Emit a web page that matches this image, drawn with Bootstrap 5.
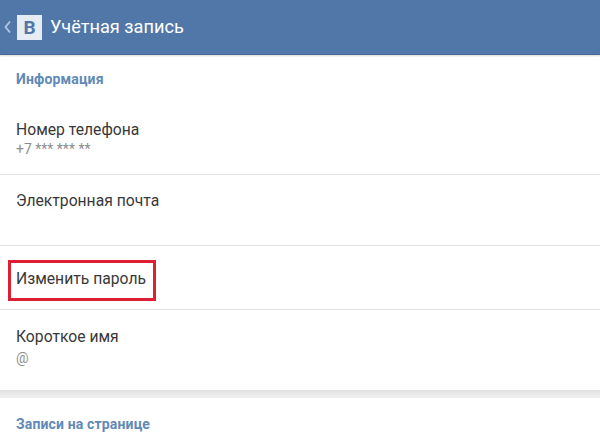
<!DOCTYPE html>
<html lang="ru">
<head>
<meta charset="utf-8">
<link href="https://cdn.jsdelivr.net/npm/bootstrap@5.3.0/dist/css/bootstrap.min.css" rel="stylesheet">
<style>
html,body{height:440px;overflow:hidden;background:#fff}
body{font-family:Roboto,"Noto Sans",sans-serif;color:#3a3a3a}
.vk-bar{height:55px;background:#5077a8;border-bottom:1px solid #46689a;box-shadow:0 1px 2px #d5d8cf}
.vk-logo{width:25px;height:25px;background:#e6ecf3;color:#5077a8;font-weight:700;font-size:19px;line-height:25px;margin-left:6px}
.vk-title{font-size:18.2px;color:#fff;margin-left:8px}
.vk-sect{font-size:14px;font-weight:700;color:#5f89b6;line-height:20px;letter-spacing:.15px;padding-left:16px}
.vk-s1{margin-top:14px}
.vk-s2{margin-top:16px}
.vk-row{padding-left:16px;border-bottom:1px solid #e2e2e2}
.vk-name{font-size:15.7px;line-height:20px;color:#383838}
.vk-sub{font-size:14px;line-height:18px;color:#8d8d8d}
.vk-r1{height:86px;padding-top:31px}
.vk-r2{height:71px;padding-top:16px}
.vk-r3{height:64px;padding-top:23px}
.vk-r4{height:80px;padding-top:17px;border-bottom:0}
.vk-r4 .vk-sub{margin-top:2px}
.vk-mark{position:absolute;left:8px;top:260px;width:148px;height:41px;border:3px solid #dc1f34}
.vk-gap{height:8px;background:linear-gradient(#e2e2e2,#efefef)}
</style>
</head>
<body>
<div class="vk-bar d-flex align-items-center">
  <svg width="7" height="14" viewBox="0 0 7 14" class="ms-1" aria-hidden="true"><path d="M6 1.5 1.5 7 6 12.5" fill="none" stroke="#b4c7dd" stroke-width="1.8"/></svg>
  <div class="vk-logo text-center">B</div>
  <div class="vk-title">Учётная запись</div>
</div>
<div class="vk-sect vk-s1">Информация</div>
<div class="vk-row vk-r1">
  <div class="vk-name">Номер телефона</div>
  <div class="vk-sub">+7 *** *** **</div>
</div>
<div class="vk-row vk-r2"><div class="vk-name">Электронная почта</div></div>
<div class="vk-row vk-r3"><div class="vk-name">Изменить пароль</div></div>
<div class="vk-row vk-r4">
  <div class="vk-name">Короткое имя</div>
  <div class="vk-sub">@</div>
</div>
<div class="vk-gap"></div>
<div class="vk-sect vk-s2">Записи на странице</div>
<div class="vk-mark"></div>
</body>
</html>
